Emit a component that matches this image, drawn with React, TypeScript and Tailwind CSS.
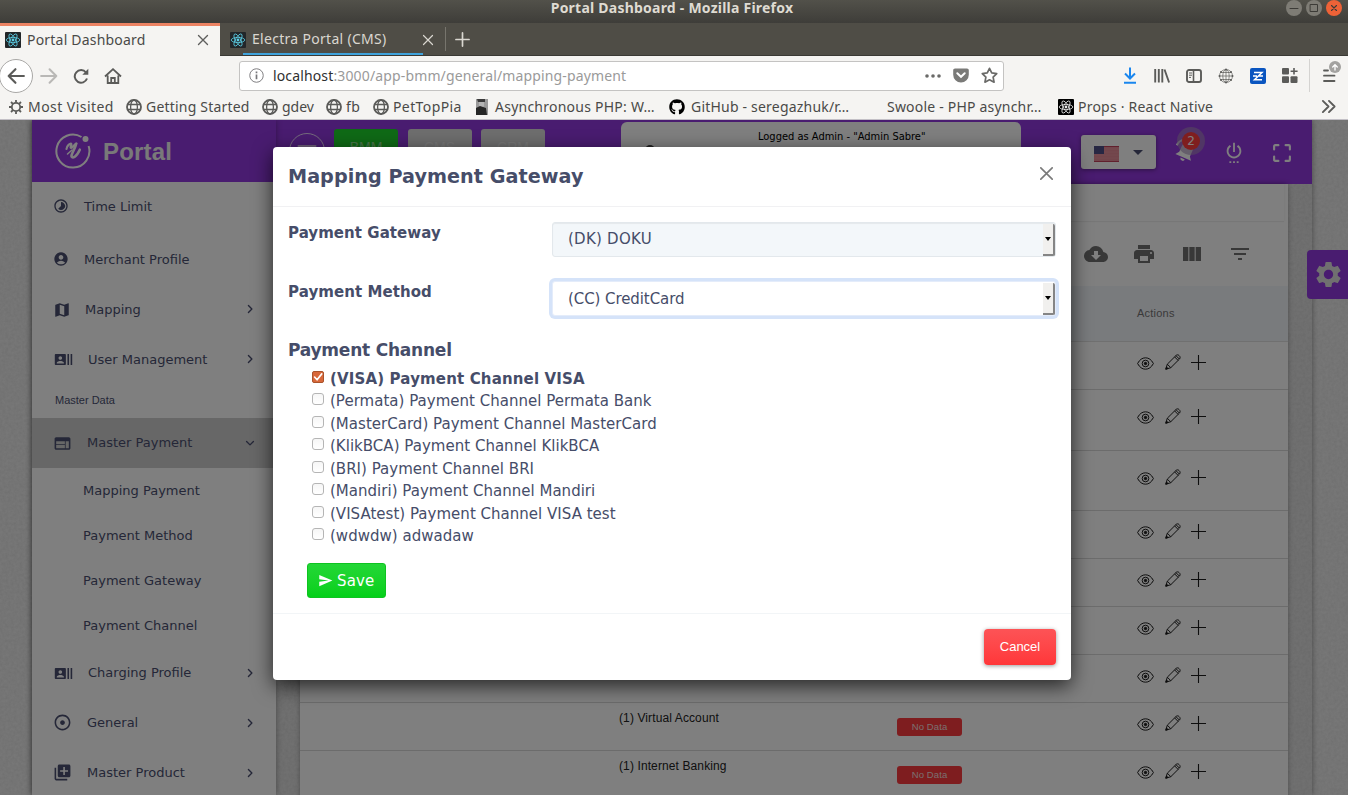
import React from "react";
import {
  MdAccountCircle,
  MdAdjust,
  MdCloudDownload,
  MdFilterList,
  MdLibraryAdd,
  MdMap,
  MdPrint,
  MdRecentActors,
  MdSend,
  MdSettings,
  MdSettingsPower,
  MdTimelapse,
  MdViewColumn,
  MdWeb,
} from "react-icons/md";
import { FaGithub } from "react-icons/fa";

type P = { className?: string };

/* ---------- icons ---------- */

const Stroke = ({ className = "", d, w = 1.5, box = "0 0 16 16" }: { className?: string; d: string; w?: number; box?: string }) => (
  <svg viewBox={box} className={className} fill="none" stroke="currentColor" strokeWidth={w} strokeLinecap="round" strokeLinejoin="round">
    <path d={d} />
  </svg>
);

const ReactLogo = ({ bg, fg }: { bg: string; fg: string }) => (
  <svg viewBox="0 0 16 16" className="size-4 shrink-0">
    <rect width="16" height="16" rx="1" fill={bg} />
    <g fill="none" stroke={fg} strokeWidth="0.8">
      <ellipse cx="8" cy="8" rx="6.8" ry="2.6" />
      <ellipse cx="8" cy="8" rx="6.8" ry="2.6" transform="rotate(60 8 8)" />
      <ellipse cx="8" cy="8" rx="6.8" ry="2.6" transform="rotate(120 8 8)" />
    </g>
    <circle cx="8" cy="8" r="1.4" fill={fg} />
  </svg>
);

const Globe = ({ className = "" }: P) => (
  <svg viewBox="0 0 16 16" className={className} fill="none" stroke="currentColor">
    <circle cx="8" cy="8" r="7" strokeWidth="1.8" />
    <ellipse cx="8" cy="8" rx="3.4" ry="7" strokeWidth="1.3" />
    <path d="M1.5 5.5h13M1.5 10.5h13" strokeWidth="1.3" />
  </svg>
);

const Gear = ({ className = "" }: P) => (
  <svg viewBox="0 0 16 16" className={className} fill="none" stroke="currentColor">
    <circle cx="8" cy="8" r="4.2" strokeWidth="1.8" />
    <path d="M8 1v2.6M8 12.4V15M1 8h2.6M12.4 8H15M3 3l1.9 1.9M11.1 11.1L13 13M3 13l1.9-1.9M11.1 4.9L13 3" strokeWidth="1.8" />
  </svg>
);

const EyeIcon = () => (
  <svg viewBox="0 0 17 13" className="h-[13px] w-[17px]" fill="none" stroke="currentColor" strokeWidth="1">
    <path d="M.6 6.5C2.600 2.700 5.200 .8 8.500 .8s5.900 1.900 7.900 5.700c-2 3.800-4.600 5.700-7.900 5.700S2.600 10.300 .6 6.500z" />
    <circle cx="8.500" cy="6.500" r="3.300" />
    <circle cx="8.500" cy="6.500" r="1.200" fill="currentColor" />
  </svg>
);

const PencilIcon = () => (
  <svg viewBox="0 0 16 16" className="size-[16px]" fill="none" stroke="currentColor" strokeWidth="1" strokeLinejoin="round">
    <path d="M.8 15.200l1.500-5L11 1.500c.9-.9 2.200-.9 3 0l.5.500c.8.800.8 2.100 0 3L5.800 13.700zM2.300 10.200l3.500 3.500M9.600 2.900l3.500 3.500M11 1.700l3.400 3.400" />
    <path d="M.8 15.200l.7-2.200 1.500 1.500z" fill="currentColor" />
  </svg>
);

const PlusIcon = () => (
  <svg viewBox="0 0 15 15" className="size-[15px]" fill="none" stroke="currentColor" strokeWidth="1.100">
    <path d="M7.500 0v15M0 7.500h15" />
  </svg>
);

const BellIcon = () => (
  <svg viewBox="0 0 24 24" className="size-[28px] rotate-[24deg] text-white" fill="currentColor">
    <path d="M12 3.500c-3.400.5-5 3-5 6.500v5l-2.300 3h14.600L17 15v-5c0-3.500-1.600-6-5-6.500zM10 19h4a2 2 0 0 1-4 0z" />
    <path d="M5.500 4.500C3.800 6 2.800 8.200 2.800 10.700" fill="none" stroke="currentColor" strokeWidth="1.700" />
  </svg>
);

const BrandMark = () => (
  <svg viewBox="0 0 36 38" className="h-[38px] w-[36px]" fill="none" stroke="#fff">
    <path d="M26.500 5A16.500 16.500 0 1 0 33.600 14" strokeWidth="2" />
    <circle cx="30.500" cy="7" r="3" fill="#fff" stroke="none" />
    <path d="M11.500 17c.3-3.500 3.700-5.800 4.700-5.300 1.200.7-1.700 3.800-.2 4.100 1.800.3 3.600-4.300 5.500-4.300" strokeWidth="2.200" strokeLinecap="round" strokeLinejoin="round" />
    <path d="M21 11.700c.3 2.300-3 7.500-4.200 10.800-1 3 .8 3.600 3 2.200 2.200-1.500 3.600-4 5-7" strokeWidth="2.600" strokeLinecap="round" strokeLinejoin="round" />
    <path d="M12.500 22l4.500-4" strokeWidth="1.500" strokeLinecap="round" />
  </svg>
);

/* ---------- browser chrome ---------- */

function TitleBar() {
  return (
    <div className="flex h-[23px] shrink-0 items-start bg-gradient-to-b from-[#52514a] to-[#3e3d39]">
      <div className="w-[64px] shrink-0" />
      <div className="flex-1 text-center text-[14px] font-bold leading-[16px] tracking-[0.230px] text-[#dfdbd2]">
        Portal Dashboard - Mozilla Firefox
      </div>
      <div className="flex w-[68px] shrink-0 gap-1 pl-[6px]">
        <span className="flex size-4 items-center justify-center rounded-full bg-[#7e7c75] text-[#3c3b37]">
          <Stroke className="size-4" w={1} d="M4 8.500h8" />
        </span>
        <span className="flex size-4 items-center justify-center rounded-full bg-[#7e7c75] text-[#3c3b37]">
          <Stroke className="size-4" w={1} d="M4.500 4.500h7v7h-7z" />
        </span>
        <span className="flex size-4 items-center justify-center rounded-full bg-[#ee6237] text-[#3c3b37]">
          <Stroke className="size-4" w={1.100} d="M5.500 5.500l5 5M10.500 5.500l-5 5" />
        </span>
      </div>
    </div>
  );
}

function TabStrip() {
  return (
    <div className="flex h-[33px] shrink-0 bg-[#4f4d46] text-[14px]">
      <div className="flex w-[220px] items-center border-t-[3px] border-[#ec8363] bg-[#f5f4f2] pb-[3px] pl-[5px] text-[#4a4a48]">
        <ReactLogo bg="#222629" fg="#5ccfe6" />
        <span className="mb-px ml-[6px] w-[170px] tracking-[0.200px]">Portal Dashboard</span>
        <Stroke className="size-[12px] text-[#5e5e5c]" w={1.800} d="M2 2l12 12M14 2L2 14" />
      </div>
      <div className="relative flex w-[225px] items-center border-b border-[#3a3934] pl-[10px] pt-px text-[#dad7d0]">
        <ReactLogo bg="#222629" fg="#5ccfe6" />
        <span className="mb-[2px] ml-[6px] w-[170px] tracking-[0.300px]">Electra Portal (CMS)</span>
        <Stroke className="size-[12px]" w={1.600} d="M2 2l12 12M14 2L2 14" />
        <span className="absolute bottom-0 left-[23px] h-[2px] w-[180px] bg-[#3fa3dc]" />
      </div>
      <div className="flex flex-1 items-center border-b border-[#3a3934] text-[#dad7d0]">
        <span className="h-6 w-px bg-[#77756d]" />
        <Stroke className="ml-[9px] size-[15px]" w={1.800} d="M8 1v14M1 8h14" />
      </div>
    </div>
  );
}

function NavBar() {
  return (
    <div className="flex h-[41px] shrink-0 items-center bg-[#f5f4f2] pb-[2px] text-[#5b5b59]">
      <span className="-ml-[1px] flex size-[34px] items-center justify-center rounded-full border border-[#a9a8a6] bg-white">
        <Stroke className="size-[18px]" w={1.900} d="M15 8H1.500M7.500 2L1.500 8l6 6" />
      </span>
      <Stroke className="ml-[7px] size-[18px] text-[#b9b8b6]" w={1.800} d="M1 8h13.500M8.500 2l6 6-6 6" />
      <svg viewBox="0 0 16 16" className="ml-[15px] size-4" fill="none" stroke="currentColor" strokeWidth="2">
        <path d="M14 10.500A6.300 6.300 0 1 1 13 4.500" />
        <path d="M15.300 .8v6h-6z" fill="currentColor" stroke="none" />
      </svg>
      <svg viewBox="0 0 18 16" className="ml-[15px] h-[16px] w-[18px]" fill="none" stroke="currentColor" strokeWidth="1.800">
        <path d="M1 8.500L9 1.200l8 7.300M3.700 7.500v7.500h10.600V7.500" />
        <path d="M7.200 15v-5h3.600v5" />
      </svg>
      <div className="ml-[117px] flex h-[30px] w-[765px] items-center rounded-[3px] border border-[#c4c3c2] bg-white">
        <svg viewBox="0 0 16 16" className="ml-[9px] size-[15px] text-[#77767a]" fill="none" stroke="currentColor">
          <circle cx="8" cy="8" r="7.200" />
          <path d="M8 7v5M8 3.800v1.800" strokeWidth="1.800" />
        </svg>
        <span className="ml-[9px] flex-1 text-[14px] tracking-[0.140px] text-[#9a9a9a]">
          <span className="text-[#2f2f2f]">localhost</span>:3000/app-bmm/general/mapping-payment
        </span>
        <svg viewBox="0 0 16 4" className="mr-[-1px] h-1 w-4 text-[#6a6a68]" fill="currentColor">
          <circle cx="2" cy="2" r="1.800" />
          <circle cx="8" cy="2" r="1.800" />
          <circle cx="14" cy="2" r="1.800" />
        </svg>
        <svg viewBox="0 0 16 15" className="ml-[13px] h-[15px] w-4">
          <path d="M2 .5h12c1 0 1.800.8 1.800 1.800v4.400A7.800 7.800 0 0 1 .2 6.700V2.300C.2 1.300 1 .5 2 .5z" fill="#7a7a78" />
          <path d="M4.300 5.300L8 8.800l3.700-3.500" fill="none" stroke="#fff" strokeWidth="2" strokeLinecap="round" />
        </svg>
        <Stroke className="ml-[12px] mr-[5px] size-[17px] text-[#6a6a68]" w={1.600} d="M8 1.200l2.100 4.400 4.700.6-3.400 3.300.9 4.800L8 12l-4.300 2.300.9-4.800L1.200 6.200l4.700-.6z" />
      </div>
      <svg viewBox="0 0 14 17" className="ml-[119px] h-[17px] w-[14px]" fill="none" stroke="#1a86ee" strokeWidth="2">
        <path d="M7 .5v11M2 6.500l5 5 5-5M1 15.800h12" />
      </svg>
      <svg viewBox="0 0 16 15" className="ml-[17px] h-[15px] w-4" fill="none" stroke="currentColor" strokeWidth="1.900">
        <path d="M1.200 1v13.500M4.800 1v13.500M8.300 1v13.500M10.500 1.500l4.600 13" />
      </svg>
      <svg viewBox="0 0 16 14" className="ml-[16px] h-[14px] w-4" fill="none" stroke="currentColor">
        <rect x="1" y="1" width="14" height="12" rx="2" strokeWidth="1.900" />
        <path d="M7.500 1v12" strokeWidth="1.600" />
        <path d="M3 4h3M3 6.200h3M3 8.400h2" />
      </svg>
      <svg viewBox="0 0 16 16" className="ml-[16px] size-4" fill="none" stroke="currentColor" strokeWidth=".7">
        <circle cx="8" cy="8" r="6.500" />
        <ellipse cx="8" cy="8" rx="3.200" ry="6.500" />
        <path d="M8 1.500v13M1.500 8h13M2.500 4.500h11M2.500 11.500h11" />
        <g fill="currentColor" stroke="none">
          <circle cx="8" cy="1.500" r="1" />
          <circle cx="3" cy="4" r="1" />
          <circle cx="13" cy="4" r="1" />
          <circle cx="1.500" cy="8" r="1" />
          <circle cx="14.500" cy="8" r="1" />
          <circle cx="3" cy="12" r="1" />
          <circle cx="13" cy="12" r="1" />
          <circle cx="8" cy="14.500" r="1" />
        </g>
      </svg>
      <svg viewBox="0 0 16 16" className="ml-[16px] size-4">
        <rect width="16" height="16" rx="2" fill="#0a55c0" />
        <path d="M4 4.500h8l-7.500 7.200h7.500M3 8h4M9 8h4" stroke="#fff" strokeWidth="1.500" fill="none" />
      </svg>
      <svg viewBox="0 0 16 15" className="ml-[16px] h-[15px] w-4" fill="currentColor">
        <rect width="7" height="6.600" rx="1" />
        <rect y="8.300" width="7" height="6.600" rx="1" />
        <rect x="8.500" y="8.300" width="7" height="6.600" rx="1" />
        <path d="M11.200 0h1.600v2.600h2.800v1.500h-2.800v2.500h-1.600V4.100H8.600V2.600h2.600z" />
      </svg>
      <span className="ml-[11px] h-[33px] w-px bg-[#d4d3d1]" />
      <svg viewBox="0 0 18 22" className="mb-[9px] ml-[13px] h-[22px] w-[18px]" fill="none" stroke="currentColor" strokeWidth="1.800" strokeLinecap="round">
        <path d="M1 10.500h4M1 15.700h10.500M1 21h10.500" />
        <circle cx="12" cy="7" r="6" fill="#a3a2a0" stroke="none" />
        <path d="M12 10v-5M9.700 7L12 4.700l2.300 2.300" stroke="#fff" strokeWidth="1.300" />
      </svg>
    </div>
  );
}

function Bookmark({ icon, label, className = "" }: { icon: React.ReactNode; label: string; className?: string }) {
  return (
    <span className={`flex shrink-0 items-center whitespace-nowrap ${className}`}>
      {icon}
      <span className="ml-[4px]">{label}</span>
    </span>
  );
}

function BookmarkBar() {
  return (
    <div className="flex h-[23px] shrink-0 items-center border-b border-[#c3c0c6] bg-[#f5f4f2] pb-[3px] text-[14px] text-[#4a4a48]">
      <Bookmark className="ml-[8px] w-[118px] tracking-[0.450px]" icon={<Gear className="size-4 text-[#5b5b59]" />} label="Most Visited" />
      <Bookmark className="w-[136px] tracking-[0.200px]" icon={<Globe className="size-4 text-[#5b5b59]" />} label="Getting Started" />
      <Bookmark className="w-[64px]" icon={<Globe className="size-4 text-[#5b5b59]" />} label="gdev" />
      <Bookmark className="w-[47px] tracking-[0.400px]" icon={<Globe className="size-4 text-[#5b5b59]" />} label="fb" />
      <Bookmark className="w-[101px] tracking-[0.400px]" icon={<Globe className="size-4 text-[#5b5b59]" />} label="PetTopPia" />
      <Bookmark
        className="w-[195px] tracking-[0.240px]"
        icon={
          <svg viewBox="0 0 16 16" className="mr-px size-4">
            <path d="M2 0h12v16H2z" fill="#9a9a9a" />
            <path d="M3 0h8v3H4z" fill="#3a3a3a" />
            <path d="M5 3h5v4l-2 2-3-2z" fill="#b5b5b5" />
            <path d="M2 9l4-2 6 2 1 7H2z" fill="#262626" />
          </svg>
        }
        label="Asynchronous PHP: W…"
      />
      <Bookmark className="w-[218px] tracking-[0.200px]" icon={<FaGithub className="mr-[2px] size-4 text-black" />} label="GitHub - seregazhuk/r…" />
      <Bookmark className="-ml-[4px] w-[175px] tracking-[0.200px]" icon={null} label="Swoole - PHP asynchr…" />
      <Bookmark className="w-[263px] tracking-[0.220px]" icon={<ReactLogo bg="#000" fg="#e8e8e8" />} label="Props · React Native" />
      <Stroke className="size-[15px] text-[#5b5b59]" w={2} d="M2 2l6 6-6 6M8.500 2l6 6-6 6" />
    </div>
  );
}

/* ---------- application behind the dialog ---------- */

const Chevron = ({ down = false }: { down?: boolean }) => (
  <Stroke className="size-[10px]" w={2.200} d={down ? "M2.500 5.500L8 11l5.500-5.500" : "M5.500 2.500L11 8l-5.500 5.500"} />
);

function SideItem({ icon, label, iconBox, chevron, active = false, low = false }: { icon: React.ReactNode; label: string; iconBox: string; chevron?: "right" | "down"; active?: boolean; low?: boolean }) {
  return (
    <div className={`flex h-[50px] shrink-0 items-center pl-[23px] ${active ? "bg-[#cfcfcf]" : ""}`}>
      <span className={`shrink-0 ${iconBox}`}>{icon}</span>
      <span className={`flex-1 whitespace-nowrap ${low ? "pt-[2px]" : ""}`}>{label}</span>
      {chevron && (
        <span className="mb-px mr-[21px]">
          <Chevron down={chevron === "down"} />
        </span>
      )}
    </div>
  );
}

function Sidebar() {
  return (
    <aside className="z-10 flex w-[244px] shrink-0 flex-col bg-white shadow-[0_0_6px_rgba(0,0,0,0.350)]">
      <div className="flex h-[62px] shrink-0 items-center gap-[12px] bg-[#9338e0] pl-[23px]">
        <BrandMark />
        <span className="pt-[2px] font-['Liberation_Sans'] text-[24px] font-bold tracking-[0.200px] text-[#f2f2f2]">Portal</span>
      </div>
      <div className="flex flex-col font-['DejaVu_Sans'] text-[13px] text-[#4a4f70]">
        <div className="-mb-[3px] h-[2px]" />
        <SideItem low iconBox="w-[29px] tracking-normal" icon={<MdTimelapse className="-ml-[2px] size-[16px]" />} label="Time Limit" />
        <div className="h-[3px]" />
        <SideItem low iconBox="w-[29px]" icon={<MdAccountCircle className="-ml-[2px] size-[16px]" />} label="Merchant Profile" />
        <SideItem low iconBox="w-[30px]" icon={<MdMap className="-ml-[2px] mt-px size-[18px]" />} label="Mapping" chevron="right" />
        <SideItem low iconBox="w-[33px]" icon={<MdRecentActors className="-ml-px size-[19px]" />} label="User Management" chevron="right" />
        <div className="flex h-[34px] items-center pb-[2px] pl-[23px] font-['Liberation_Sans'] text-[11px]">Master Data</div>
        <SideItem iconBox="w-[32px]" icon={<MdWeb className="-ml-[2px] size-[19px]" />} label="Master Payment" chevron="down" active />
        {["Mapping Payment", "Payment Method", "Payment Gateway", "Payment Channel"].map((t) => (
          <div key={t} className="flex h-[45px] items-center pl-[51px]">
            {t}
          </div>
        ))}
        <SideItem iconBox="w-[33px]" icon={<MdRecentActors className="-ml-px size-[19px]" />} label="Charging Profile" chevron="right" />
        <SideItem iconBox="w-[32px]" icon={<MdAdjust className="-ml-[2px] -mt-[2px] size-[19px]" />} label="General" chevron="right" />
        <SideItem iconBox="w-[32px]" icon={<MdLibraryAdd className="-ml-[2px] -mt-[2px] size-[19px]" />} label="Master Product" chevron="right" />
      </div>
    </aside>
  );
}

function UsFlag() {
  return (
    <svg viewBox="0 0 25 16" className="h-4 w-[25px]">
      <rect width="25" height="16" fill="#e58a96" />
      <path d="M0 .5h25M0 15.500h25" stroke="#c2405a" />
      <path d="M10 3h15M10 6h15M0 9h25M0 12h25" stroke="#e7959f" strokeWidth="1" />
      <rect width="10" height="8" fill="#4e4e86" />
    </svg>
  );
}

function TopBar() {
  return (
    <header className="flex h-16 shrink-0 bg-[#9338e0] pl-[13px]">
      <span className="mt-[13px] flex size-9 items-center justify-center rounded-full border border-white/80">
        <Stroke className="size-5 text-white/90" w={1.200} d="M1 4h14M1 8h14M1 12h14" />
      </span>
      <div className="ml-[9px] mt-[9px] flex gap-[9.500px] font-['Liberation_Sans'] text-[14px] text-white/50">
        <span className="flex h-9 w-16 items-center justify-center rounded-[3px] bg-[#1fd52c]">BMM</span>
        <span className="flex h-9 w-16 items-center justify-center rounded-[3px] bg-[#dcdcdc]">CMS</span>
        <span className="flex h-9 w-16 items-center justify-center rounded-[3px] bg-[#dcdcdc]">CRM</span>
      </div>
      <div className="ml-[76px] mt-[2px] h-[58px] w-[400px] rounded-[6px] bg-white pl-[42px] pr-2 pt-[8px] font-['DejaVu_Sans_Condensed','DejaVu_Sans'] text-[11px] leading-[14px] text-black">
        <p className="ml-[95px] whitespace-nowrap">Logged as Admin - &quot;Admin Sabre&quot;</p>
        <span className="-ml-[18px] mt-px block size-[10px] rounded-full bg-[#444]" />
      </div>
      <div className="ml-[60px] mt-[15px] flex h-[34px] w-[75px] items-center rounded-[3px] bg-white pl-[13px] shadow-[0_1px_4px_rgba(0,0,0,0.400)]">
        <span className="mt-[3px]">
          <UsFlag />
        </span>
        <span className="ml-[14px] border-x-[5px] border-t-[5px] border-x-transparent border-t-[#4a4f73]" />
      </div>
      <div className="relative ml-[16px] mr-px mt-[17px] size-[26px]">
        <BellIcon />
        <span className="absolute -top-[10px] left-[5px] flex size-7 items-center justify-center rounded-full bg-[#a98fbb]/60">
          <span className="flex size-[18px] items-center justify-center rounded-full bg-[#ff3d3d] font-['DejaVu_Sans'] text-[12px] text-white">2</span>
        </span>
      </div>
      <MdSettingsPower className="ml-[24px] mt-[21px] size-[22px] text-white" />
      <Stroke className="ml-[28px] mt-[24px] size-[18px] text-white" w={1.900} d="M1 4.800V2C1 1.300 1.300 1 2 1H4.800M11.200 1H14c.7 0 1 .3 1 1V4.800M15 11.200V14c0 .7-.3 1-1 1H11.200M4.800 15H2c-.7 0-1-.3-1-1V11.200" />
    </header>
  );
}

const rows: { size: string; pad: string; text?: string }[] = [
  { size: "h-[48px]", pad: "pt-[13px]" },
  { size: "h-[61px]", pad: "pt-[19px]" },
  { size: "h-[60px]", pad: "pt-[19px]" },
  { size: "h-[48px]", pad: "pt-[13px]" },
  { size: "h-[48px]", pad: "pt-[13px]" },
  { size: "h-[48px]", pad: "pt-[13px]" },
  { size: "h-[48px]", pad: "pt-[13px]" },
  { size: "h-[48px]", pad: "pt-[13px]", text: "(1) Virtual Account" },
  { size: "h-[48px]", pad: "pt-[13px]", text: "(1) Internet Banking" },
];

function TableCard() {
  return (
    <section className="mx-6 flex flex-1 flex-col bg-white font-['Liberation_Sans'] shadow-[0_0_5px_rgba(0,0,0,0.300)]">
      <div className="mr-1 h-[38px] shrink-0 border-b border-[#efefef] shadow-[0_-1px_3px_rgba(0,0,0,0.080)]" />
      <div className="flex h-[64px] shrink-0 items-center justify-end gap-6 pr-9 text-[#717171]">
        <MdCloudDownload className="size-6" />
        <MdPrint className="size-6" />
        <MdViewColumn className="size-6" />
        <MdFilterList className="size-6" />
      </div>
      <div className="flex h-[56px] shrink-0 border-b border-[#e0e0e0] bg-[#f3f6fb] pl-[837px] pt-[19px] text-[11px] tracking-[0.230px] text-[#757575]">Actions</div>
      {rows.map((r, i) => (
        <div key={i} className={`flex shrink-0 border-b border-[#d9d9d9] ${r.size}`}>
          <div className="w-[597px] pl-[319px] pt-[8px] text-[12px] leading-[14px] tracking-[0.110px] text-[#222]">{r.text}</div>
          <div className="w-[240px] pt-[15px]">
            {r.text && <span className="flex h-[18px] w-[65px] items-center justify-center rounded-[3px] bg-[#fd3a3e] text-[9.500px] tracking-[0.100px] text-[#f5dede]">No Data</span>}
          </div>
          <div className={`flex items-start text-[#1c1c1c] ${r.pad}`}>
            <span className="mt-[2px]">
              <EyeIcon />
            </span>
            <span className="-mt-px ml-[11px]">
              <PencilIcon />
            </span>
            <span className="ml-[10px]">
              <PlusIcon />
            </span>
          </div>
        </div>
      ))}
    </section>
  );
}

function Paper() {
  return (
    <svg className="absolute inset-0 size-full opacity-25">
      <filter id="grain">
        <feTurbulence type="fractalNoise" baseFrequency="0.350" numOctaves="3" seed="4" />
        <feColorMatrix values="0 0 0 0 0.350  0 0 0 0 0.350  0 0 0 0 0.350  1 0 0 0 -0.200" />
      </filter>
      <rect width="100%" height="100%" filter="url(#grain)" />
    </svg>
  );
}

/* ---------- dialog ---------- */

function SelectBox({ value, focused = false }: { value: string; focused?: boolean }) {
  return (
    <div
      className={`flex h-[35px] w-[504px] items-stretch rounded-[3px] border pl-[15px] ${
        focused
          ? "border-[#e4ecfa] bg-white shadow-[0_0_0_3px_#d5e3f9]"
          : "border-[#e3e8ec] bg-[#f3f7fa] shadow-[inset_0_1px_1px_rgba(0,0,0,0.060)]"
      }`}
    >
      <span className={`flex-1 self-center ${focused ? "pt-px tracking-[-0.080px]" : "pb-px tracking-[0.250px]"}`}>{value}</span>
      <span className="mt-px flex w-[12px] items-center justify-center rounded-r-[2px] border-b-2 border-r-2 border-[#858585] bg-[#f1f0ee]">
        <span className="border-x-[3px] border-t-[4px] border-x-transparent border-t-black" />
      </span>
    </div>
  );
}

const channels = [
  "(VISA) Payment Channel VISA",
  "(Permata) Payment Channel Permata Bank",
  "(MasterCard) Payment Channel MasterCard",
  "(KlikBCA) Payment Channel KlikBCA",
  "(BRI) Payment Channel BRI",
  "(Mandiri) Payment Channel Mandiri",
  "(VISAtest) Payment Channel VISA test",
  "(wdwdw) adwadaw",
];

function MappingDialog() {
  return (
    <div className="absolute left-[273px] top-[27px] z-30 flex h-[533px] w-[798px] flex-col rounded-[4px] bg-white font-['DejaVu_Sans'] text-[15px] text-[#464d69] shadow-[0_6px_20px_rgba(0,0,0,0.700)]">
      <div className="flex h-[60px] shrink-0 items-start justify-between border-b border-[#f1f1f3] pl-[15px] pr-[18px]">
        <h2 className="mt-[15px] text-[19.200px] font-bold leading-[30px] tracking-[0.040px]">Mapping Payment Gateway</h2>
        <Stroke className="mt-[20px] size-[13px] text-[#7a7a7a]" w={2} d="M1 1l14 14M15 1L1 15" />
      </div>
      <div className="flex h-[407px] shrink-0 flex-col border-b border-[#f2f5f7] pl-[15px] pt-[15px]">
        <div className="flex h-[59px]">
          <span className="w-[264px] pt-px font-bold leading-[21px] tracking-[0.050px]">Payment Gateway</span>
          <SelectBox value="(DK) DOKU" />
        </div>
        <div className="flex h-[59px]">
          <span className="w-[264px] pt-px font-bold leading-[21px] tracking-[0.070px]">Payment Method</span>
          <SelectBox value="(CC) CreditCard" focused />
        </div>
        <h3 className="pt-px text-[17px] font-bold leading-[19px] tracking-[-0.220px]">Payment Channel</h3>
        <div className="pl-[24px] pt-[7px]">
          {channels.map((c, i) => (
            <div key={c} className="flex h-[22.500px] items-start">
              {i === 0 ? (
                <span className="mt-[4px] size-[12px] rounded-[2px] border border-[#a9532c] bg-[#d8683a] text-white">
                  <Stroke className="size-[10px]" w={2.600} d="M2.500 8l4 4.500L14 3" />
                </span>
              ) : (
                <span className="mt-[3.600px] size-[12px] rounded-[3px] border border-[#b5b5b5] bg-gradient-to-b from-[#f6f6f6] to-white" />
              )}
              <span className={`ml-[6px] whitespace-nowrap pt-[0.600px] leading-[22px] ${i === 0 ? "font-bold tracking-[0.150px]" : "tracking-[0.020px]"}`}>{c}</span>
            </div>
          ))}
        </div>
        <button className="ml-[19px] mt-[16px] flex h-[35px] w-[79px] items-center gap-[4px] rounded-[3px] border border-[#0fc321] bg-gradient-to-b from-[#23d736] to-[#04d019] pl-[10px] text-white">
          <MdSend className="size-[15px]" />
          <span className="pt-px tracking-[0.150px]">Save</span>
        </button>
      </div>
      <div className="flex justify-end pr-[15px] pt-[15px]">
        <button className="h-9 w-[72px] rounded-[4px] bg-gradient-to-b from-[#fd5356] to-[#ff3639] font-['Liberation_Sans'] text-[13px] text-white shadow-[0_1px_4px_rgba(0,0,0,0.400)]">Cancel</button>
      </div>
    </div>
  );
}

export default function App() {
  return (
    <div className="flex h-[795px] w-[1348px] flex-col overflow-hidden font-['Noto_Sans',sans-serif]">
      <TitleBar />
      <TabStrip />
      <NavBar />
      <BookmarkBar />
      <div className="relative flex-1 overflow-hidden bg-[#efefef]">
        <Paper />
        <div className="relative mx-auto mr-9 flex h-full w-[1280px] bg-black/5 shadow-[0_0_6px_rgba(0,0,0,0.400)]">
          <Sidebar />
          <div className="flex flex-1 flex-col">
            <TopBar />
            <TableCard />
          </div>
        </div>
        <div className="absolute right-0 top-[130px] flex h-[49px] w-[41px] items-center justify-center rounded-l-[4px] bg-[#9338e0] pl-[2px]">
          <MdSettings className="size-[31px] text-[#e0e0e0]" />
        </div>
        <div className="absolute inset-0 z-20 bg-black/50" />
        <MappingDialog />
      </div>
    </div>
  );
}
